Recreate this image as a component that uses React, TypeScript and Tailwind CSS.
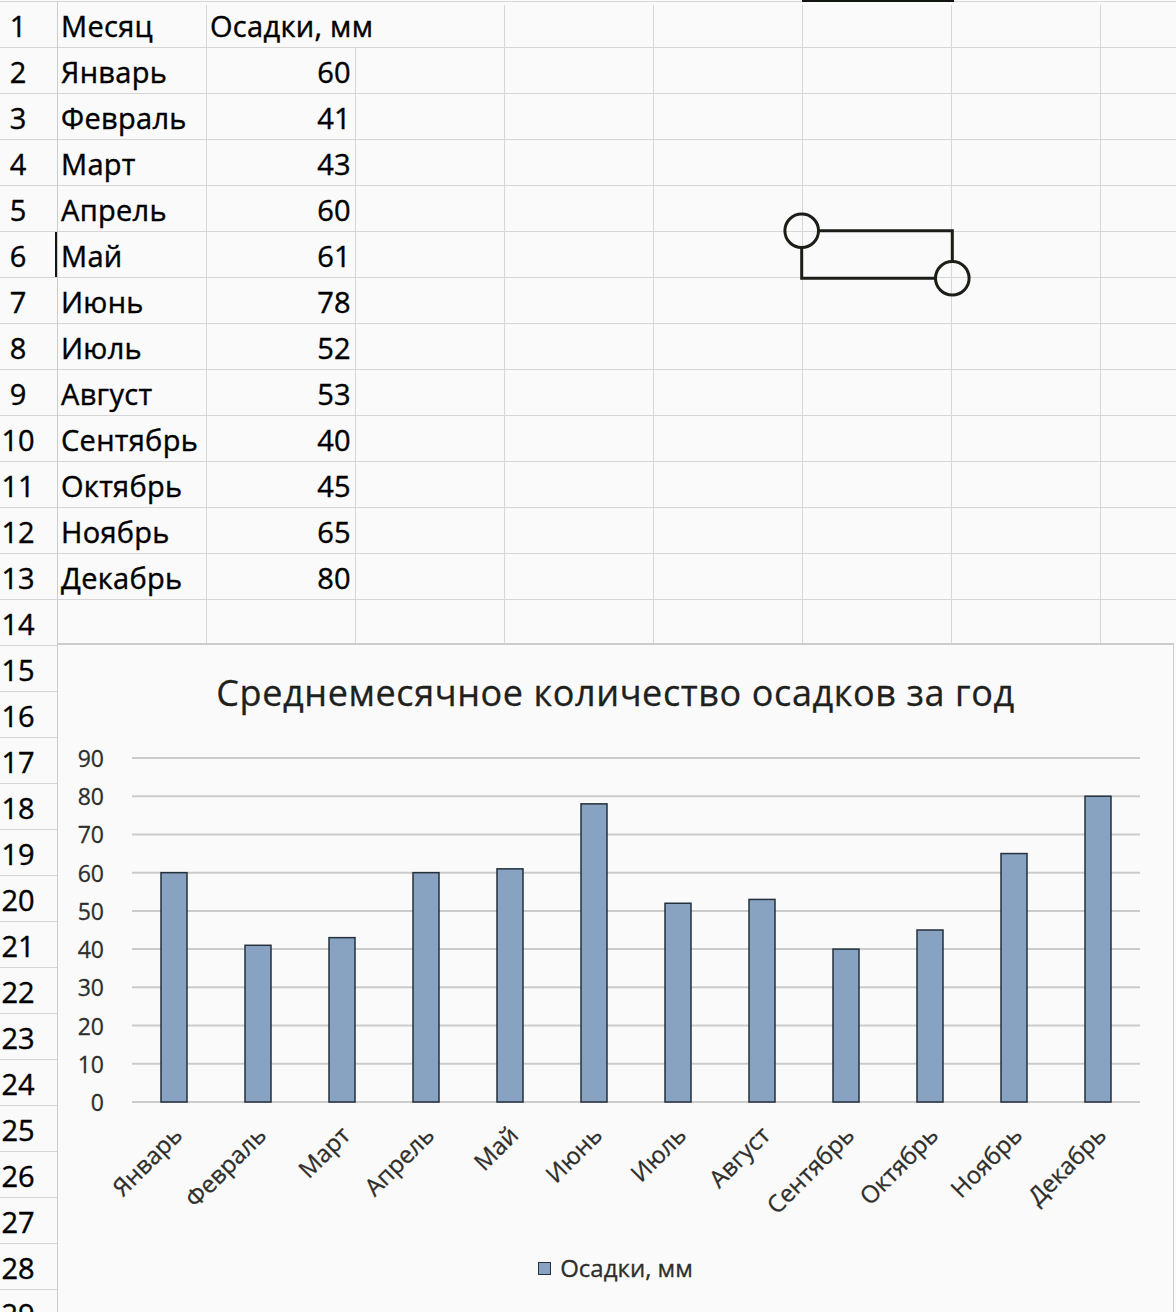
const data: [string, number][] = [
  ["Январь", 60],
  ["Февраль", 41],
  ["Март", 43],
  ["Апрель", 60],
  ["Май", 61],
  ["Июнь", 78],
  ["Июль", 52],
  ["Август", 53],
  ["Сентябрь", 40],
  ["Октябрь", 45],
  ["Ноябрь", 65],
  ["Декабрь", 80],
]

const rowNums = Array.from({ length: 29 }, (_, i) => i + 1)
const ticks = [0, 10, 20, 30, 40, 50, 60, 70, 80, 90]
const scale = 344 / 90

function EmptyCells() {
  return (
    <>
      {[0, 1, 2, 3, 4].map(i => (
        <div key={i} className="w-[149px] shrink-0 border-r border-[#d6d6d6]" />
      ))}
      <div className="flex-1" />
    </>
  )
}

function Chart() {
  return (
    <div className="w-[1116px] flex-1 border-t-2 border-r border-[#cccccc] font-['Open_Sans',sans-serif] [-webkit-text-stroke:0px]">
      <div className="pt-[26px] text-center text-[36px] leading-[44px] tracking-[0.6px] text-[#1f211d] [-webkit-text-stroke:0.3px]">
        Среднемесячное количество осадков за год
      </div>
      <svg width={1115} height={510} className="mt-[20px] block">
        {ticks.map(v => {
          const y = 367 - v * scale
          return (
            <g key={v}>
              <line x1={74} x2={1082} y1={y} y2={y} stroke="#cbcbcb" strokeWidth={2} />
              <text
                x={46}
                y={y}
                textAnchor="end"
                dominantBaseline="central"
                fontSize={23}
                fill="#2e2e2b"
                stroke="#2e2e2b"
                strokeWidth={0.3}
              >
                {v}
              </text>
            </g>
          )
        })}
        {data.map(([m, v], i) => (
          <rect
            key={m}
            x={103 + 84 * i}
            y={367 - v * scale}
            width={26}
            height={v * scale}
            fill="#87a3c1"
            stroke="#25313d"
            strokeWidth={1.5}
          />
        ))}
        {data.map(([m], i) => (
          <text
            key={m}
            transform={`translate(${119 + 84 * i} 395) rotate(-45)`}
            textAnchor="end"
            dominantBaseline="central"
            fontSize={24}
            fill="#2e2e2b"
            stroke="#2e2e2b"
            strokeWidth={0.3}
          >
            {m}
          </text>
        ))}
      </svg>
      <div className="mt-[8px] flex items-center justify-center gap-[9px] text-[24px] leading-[30px] text-[#2e2e2b] [-webkit-text-stroke:0.3px]">
        <span className="h-[13px] w-[13px] border border-[#25313d] bg-[#87a3c1]" />
        <span>Осадки, мм</span>
      </div>
    </div>
  )
}

export default function App() {
  return (
    <div className="relative flex h-[1312px] w-[1176px] overflow-hidden bg-[#fafafa] pt-px font-['Open_Sans',sans-serif] text-black [-webkit-text-stroke:0.4px]">
      {/* row headers */}
      <div className="w-[58px] shrink-0 border-r border-[#cccccc]">
        {rowNums.map(n => (
          <div key={n} className="h-[46px] border-t border-[#d6d6d6] pt-[3px] text-[29px] leading-[42px]">
            <div className="w-[36px] whitespace-nowrap text-center">{n}</div>
          </div>
        ))}
      </div>

      <div className="flex flex-1 flex-col">
        <div className="flex h-[46px] border-t border-[#d6d6d6] pt-[3px] text-[29px] leading-[42px] tracking-[0.3px]">
          <div className="w-[149px] shrink-0 border-r border-[#d6d6d6] pl-[3px]">Месяц</div>
          <div className="w-[149px] shrink-0 whitespace-nowrap pl-[3px]">Осадки, мм</div>
          <div className="w-[149px] shrink-0 border-r border-[#d6d6d6]" />
          <div className="w-[149px] shrink-0 border-r border-[#d6d6d6]" />
          <div className="w-[149px] shrink-0 border-r border-[#d6d6d6]" />
          <div className="relative w-[149px] shrink-0 border-r border-[#d6d6d6]">
            <span className="absolute left-[-1px] top-[-5px] h-[2px] w-[152px] bg-[#111611]" />
          </div>
          <div className="w-[149px] shrink-0 border-r border-[#d6d6d6]" />
          <div className="flex-1" />
        </div>

        {data.map(([m, v], i) => (
          <div key={m} className="flex h-[46px] border-t border-[#d6d6d6] text-[29px] leading-[42px] tracking-[0.3px]">
            <div className="relative w-[149px] shrink-0 whitespace-nowrap border-r border-[#d6d6d6] pl-[3px] pt-[3px]">
              {i === 4 && <span className="absolute left-[-3px] top-0 bottom-0 w-[2px] bg-[#111611]" />}
              {m}
            </div>
            <div className="w-[149px] shrink-0 border-r border-[#d6d6d6] pr-[4px] pt-[3px] text-right">{v}</div>
            <EmptyCells />
          </div>
        ))}

        <div className="flex h-[44px] border-t border-[#d6d6d6]">
          <div className="w-[149px] shrink-0 border-r border-[#d6d6d6]" />
          <div className="w-[149px] shrink-0 border-r border-[#d6d6d6]" />
          <EmptyCells />
        </div>

        <Chart />
      </div>

      {/* connector shape */}
      <svg className="absolute left-[760px] top-[190px]" width={220} height={120}>
        <path d="M58.5 40.7 H192.3 V71.5 M41.7 57.5 V88.3 H175.5" fill="none" stroke="#1b1e16" strokeWidth={3} />
        <circle cx={41.7} cy={40.7} r={16.8} fill="none" stroke="#1b1e16" strokeWidth={3} />
        <circle cx={192.3} cy={88.3} r={16.8} fill="none" stroke="#1b1e16" strokeWidth={3} />
      </svg>
    </div>
  )
}
